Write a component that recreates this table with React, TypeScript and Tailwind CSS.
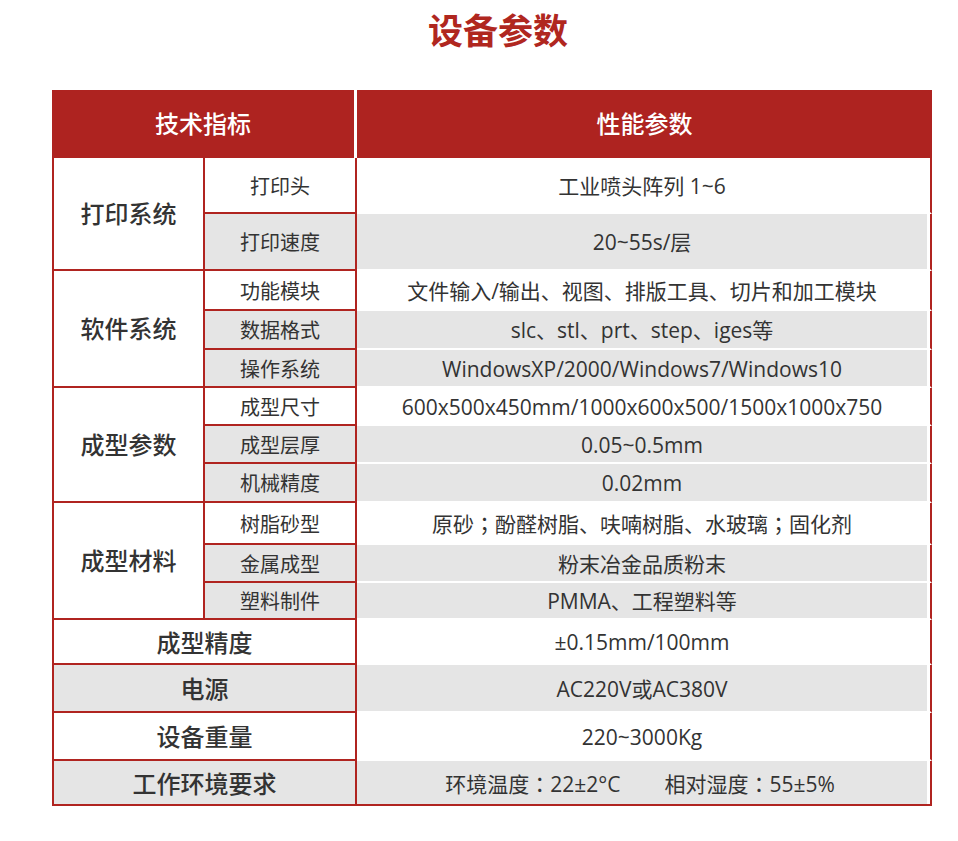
import React from "react";

const RED = "border-[#b02420]";

const P = ({ c }: { c: string }) => (
  <span style={{ fontFamily: '"Noto Sans CJK TC", sans-serif' }}>{c}</span>
);

type Sub = { label: string; value: React.ReactNode; gray: boolean; h: string };
type Group = { label: string; subs: Sub[] };

const groups: Group[] = [
  {
    label: "打印系统",
    subs: [
      { label: "打印头", value: "工业喷头阵列 1~6", gray: false, h: "h-[56px]" },
      { label: "打印速度", value: "20~55s/层", gray: true, h: "h-[57px]" },
    ],
  },
  {
    label: "软件系统",
    subs: [
      { label: "功能模块", value: "文件输入/输出、视图、排版工具、切片和加工模块", gray: false, h: "h-[40px]" },
      { label: "数据格式", value: "slc、stl、prt、step、iges等", gray: true, h: "h-[39px]" },
      { label: "操作系统", value: "WindowsXP/2000/Windows7/Windows10", gray: true, h: "h-[38px]" },
    ],
  },
  {
    label: "成型参数",
    subs: [
      { label: "成型尺寸", value: "600x500x450mm/1000x600x500/1500x1000x750", gray: false, h: "h-[38px]" },
      { label: "成型层厚", value: "0.05~0.5mm", gray: true, h: "h-[38px]" },
      { label: "机械精度", value: "0.02mm", gray: true, h: "h-[39px]" },
    ],
  },
  {
    label: "成型材料",
    subs: [
      {
        label: "树脂砂型",
        value: (
          <span>
            原砂<P c="；" />酚醛树脂、呋喃树脂、水玻璃<P c="；" />固化剂
          </span>
        ),
        gray: false,
        h: "h-[42px]",
      },
      { label: "金属成型", value: "粉末冶金品质粉末", gray: true, h: "h-[38px]" },
      { label: "塑料制件", value: "PMMA、工程塑料等", gray: true, h: "h-[37px]" },
    ],
  },
];

type Single = { label: string; value: React.ReactNode; gray: boolean; h: string; last?: boolean };
const singles: Single[] = [
  { label: "成型精度", value: "±0.15mm/100mm", gray: false, h: "h-[45px]" },
  { label: "电源", value: "AC220V或AC380V", gray: true, h: "h-[48px]" },
  { label: "设备重量", value: "220~3000Kg", gray: false, h: "h-[48px]" },
  {
    label: "工作环境要求",
    value: (
      <span className="flex gap-[44px] pr-[4px]">
        <span>
          环境温度<P c="：" />22±2°C
        </span>
        <span>
          相对湿度<P c="：" />55±5%
        </span>
      </span>
    ),
    gray: true,
    h: "h-[45px]",
    last: true,
  },
];

function ValueCell({ children, gray, last }: { children: React.ReactNode; gray: boolean; last?: boolean }) {
  return (
    <div
      className={`flex-1 flex border-r-2 ${RED} pr-[3px] border-b-2 ${
        last ? "border-b-[#b02420]" : "border-b-white"
      }`}
    >
      <div
        className={`flex-1 flex items-center justify-center pt-[3px] text-[21px] text-[#333] ${
          gray ? "bg-[#e5e5e5]" : "bg-white"
        }`}
      >
        {children}
      </div>
    </div>
  );
}

export default function App() {
  return (
    <div
      className="w-[958px] min-h-[841px] bg-white"
      style={{ fontFamily: '"Open Sans", "Noto Sans CJK SC", sans-serif' }}
    >
      <div className="ml-[52px] w-[880px]">
        <div className="h-[60px] flex items-center justify-center pl-[12px] text-[35px] font-bold text-[#b0271f] leading-none">
          设备参数
        </div>
        <div className="mt-[30px]">
          <div className="flex h-[68px] gap-[3px]">
            <div className="w-[302px] bg-[#ae2320] flex items-center justify-center text-white text-[24px] font-medium">
              技术指标
            </div>
            <div className="flex-1 bg-[#ae2320] flex items-center justify-center text-white text-[24px] font-medium">
              性能参数
            </div>
          </div>
          {groups.map((g) => (
            <div key={g.label} className="flex">
              <div
                className={`w-[153px] border-l-2 border-r-2 border-b-2 ${RED} bg-white flex items-center justify-center text-[24px] font-medium text-[#333]`}
              >
                {g.label}
              </div>
              <div className="flex-1 flex flex-col">
                {g.subs.map((s) => (
                  <div key={s.label} className={`flex ${s.h}`}>
                    <div
                      className={`w-[152px] border-r-2 border-b-2 ${RED} flex items-center justify-center pt-[3px] text-[20px] text-[#333] ${
                        s.gray ? "bg-[#e5e5e5]" : "bg-white"
                      }`}
                    >
                      {s.label}
                    </div>
                    <ValueCell gray={s.gray}>{s.value}</ValueCell>
                  </div>
                ))}
              </div>
            </div>
          ))}
          {singles.map((s) => (
            <div key={s.label} className={`flex ${s.h}`}>
              <div
                className={`w-[305px] border-l-2 border-r-2 border-b-2 ${RED} flex items-center justify-center pt-[2px] text-[24px] font-medium text-[#333] ${
                  s.gray ? "bg-[#e5e5e5]" : "bg-white"
                }`}
              >
                {s.label}
              </div>
              <ValueCell gray={s.gray} last={s.last}>
                {s.value}
              </ValueCell>
            </div>
          ))}
        </div>
      </div>
    </div>
  );
}
